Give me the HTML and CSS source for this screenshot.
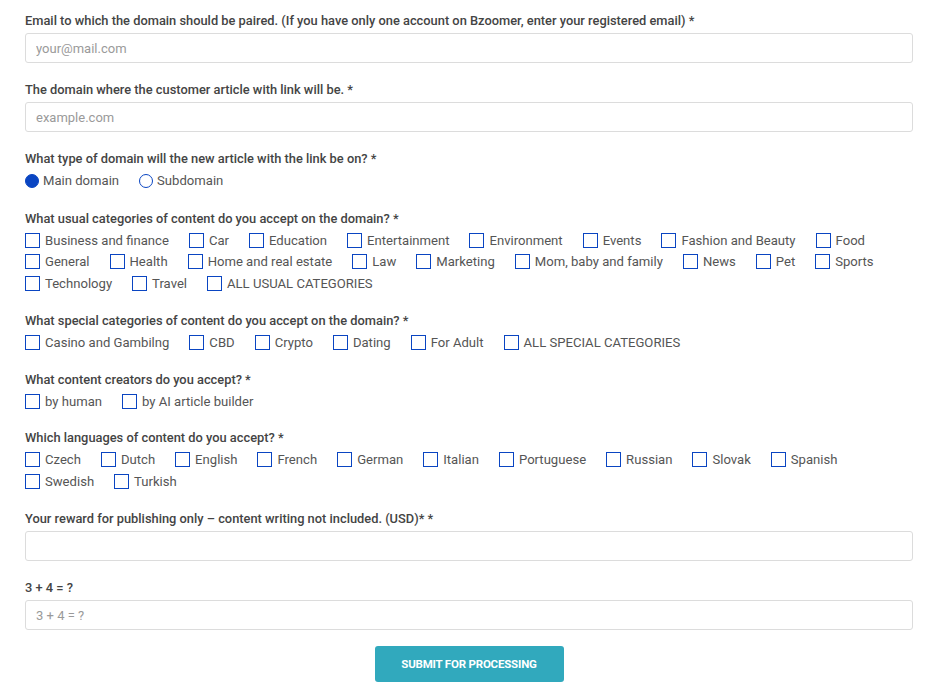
FILE: index.html
```html
<!DOCTYPE html>
<html lang="en">
<head>
<meta charset="utf-8">
<title>Domain form</title>
<link rel="stylesheet" href="styles.css">
</head>
<body>
<form class="form">
  <div class="field">
    <label class="label">Email to which the domain should be paired. (If you have only one account on Bzoomer, enter your registered email) *</label>
    <input class="input" type="text" placeholder="your@mail.com">
  </div>
  <div class="field">
    <label class="label">The domain where the customer article with link will be. *</label>
    <input class="input" type="text" placeholder="example.com">
  </div>
  <div class="field">
    <label class="label label-opts">What type of domain will the new article with the link be on? *</label>
    <div class="options">
      <label class="opt"><input class="radio" type="radio" name="t" checked><span>Main domain</span></label>
      <label class="opt"><input class="radio" type="radio" name="t"><span>Subdomain</span></label>
    </div>
  </div>
  <div class="field">
    <label class="label label-opts">What usual categories of content do you accept on the domain? *</label>
    <div class="options">
      <label class="opt"><input class="check" type="checkbox"><span>Business and finance</span></label>
      <label class="opt"><input class="check" type="checkbox"><span>Car</span></label>
      <label class="opt"><input class="check" type="checkbox"><span>Education</span></label>
      <label class="opt"><input class="check" type="checkbox"><span>Entertainment</span></label>
      <label class="opt"><input class="check" type="checkbox"><span>Environment</span></label>
      <label class="opt"><input class="check" type="checkbox"><span>Events</span></label>
      <label class="opt"><input class="check" type="checkbox"><span>Fashion and Beauty</span></label>
      <label class="opt"><input class="check" type="checkbox"><span>Food</span></label>
      <label class="opt"><input class="check" type="checkbox"><span>General</span></label>
      <label class="opt"><input class="check" type="checkbox"><span>Health</span></label>
      <label class="opt"><input class="check" type="checkbox"><span>Home and real estate</span></label>
      <label class="opt"><input class="check" type="checkbox"><span>Law</span></label>
      <label class="opt"><input class="check" type="checkbox"><span>Marketing</span></label>
      <label class="opt"><input class="check" type="checkbox"><span>Mom, baby and family</span></label>
      <label class="opt"><input class="check" type="checkbox"><span>News</span></label>
      <label class="opt"><input class="check" type="checkbox"><span>Pet</span></label>
      <label class="opt"><input class="check" type="checkbox"><span>Sports</span></label>
      <label class="opt"><input class="check" type="checkbox"><span>Technology</span></label>
      <label class="opt"><input class="check" type="checkbox"><span>Travel</span></label>
      <label class="opt"><input class="check" type="checkbox"><span>ALL USUAL CATEGORIES</span></label>
    </div>
  </div>
  <div class="field field-tight">
    <label class="label label-opts">What special categories of content do you accept on the domain? *</label>
    <div class="options">
      <label class="opt"><input class="check" type="checkbox"><span>Casino and Gambilng</span></label>
      <label class="opt"><input class="check" type="checkbox"><span>CBD</span></label>
      <label class="opt"><input class="check" type="checkbox"><span>Crypto</span></label>
      <label class="opt"><input class="check" type="checkbox"><span>Dating</span></label>
      <label class="opt"><input class="check" type="checkbox"><span>For Adult</span></label>
      <label class="opt"><input class="check" type="checkbox"><span>ALL SPECIAL CATEGORIES</span></label>
    </div>
  </div>
  <div class="field field-tight">
    <label class="label label-opts">What content creators do you accept? *</label>
    <div class="options">
      <label class="opt"><input class="check" type="checkbox"><span>by human</span></label>
      <label class="opt"><input class="check" type="checkbox"><span>by AI article builder</span></label>
    </div>
  </div>
  <div class="field">
    <label class="label label-opts">Which languages of content do you accept? *</label>
    <div class="options">
      <label class="opt"><input class="check" type="checkbox"><span>Czech</span></label>
      <label class="opt"><input class="check" type="checkbox"><span>Dutch</span></label>
      <label class="opt"><input class="check" type="checkbox"><span>English</span></label>
      <label class="opt"><input class="check" type="checkbox"><span>French</span></label>
      <label class="opt"><input class="check" type="checkbox"><span>German</span></label>
      <label class="opt"><input class="check" type="checkbox"><span>Italian</span></label>
      <label class="opt"><input class="check" type="checkbox"><span>Portuguese</span></label>
      <label class="opt"><input class="check" type="checkbox"><span>Russian</span></label>
      <label class="opt"><input class="check" type="checkbox"><span>Slovak</span></label>
      <label class="opt"><input class="check" type="checkbox"><span>Spanish</span></label>
      <label class="opt"><input class="check" type="checkbox"><span>Swedish</span></label>
      <label class="opt"><input class="check" type="checkbox"><span>Turkish</span></label>
    </div>
  </div>
  <div class="field">
    <label class="label">Your reward for publishing only – content writing not included. (USD)* *</label>
    <input class="input" type="text">
  </div>
  <div class="field field-last">
    <label class="label">3 + 4 = ?</label>
    <input class="input" type="text" placeholder="3 + 4 = ?">
  </div>
  <div class="actions">
    <button class="submit" type="button">SUBMIT FOR PROCESSING</button>
  </div>
</form>
</body>
</html>
```

FILE: styles.css
```css
* { box-sizing: border-box; }
html, body { margin: 0; padding: 0; background: #fff; }
body {
  font-family: Roboto, "Noto Sans", sans-serif;
  color: #4a4a4a;
}
.form {
  width: 888px;
  margin: 0 0 0 25px;
  padding-top: 13px;
}
.field { margin-bottom: 19px; }
.field-tight { margin-bottom: 18px; }
.field-last { margin-bottom: 16px; }
.label {
  display: block;
  font-size: 12.85px;
  line-height: 16px;
  font-weight: 500;
  color: #444;
  margin-bottom: 4px;
}
.label-opts { margin-bottom: 3px; }
.input {
  display: block;
  width: 100%;
  height: 30px;
  border: 1px solid #dcdcdc;
  border-radius: 3px;
  padding: 0 10px;
  font-family: Roboto, "Noto Sans", sans-serif;
  font-size: 13px;
  color: #444;
  outline: none;
}
.input::placeholder { color: #9a9a9a; }
.options {
  display: flex;
  flex-wrap: wrap;
  column-gap: 20px;
}
.opt {
  display: flex;
  align-items: center;
  height: 21.5px;
  font-size: 13.1px;
  color: #555;
}
.check, .radio {
  -webkit-appearance: none;
  appearance: none;
  margin: 0 5px 0 0;
  width: 15px;
  height: 15px;
  border: 1.5px solid #0a45c2;
  background: #fff;
  flex: none;
}
.radio {
  width: 14px;
  height: 14px;
  border-radius: 50%;
  margin-right: 4px;
}
.radio:checked { background: #0a45c2; }
.actions {
  display: flex;
  justify-content: center;
}
.submit {
  width: 189px;
  height: 36px;
  border: 0;
  border-radius: 3px;
  background: #31a9bd;
  color: #fff;
  font-family: Roboto, sans-serif;
  font-weight: 700;
  font-size: 11.5px;
  letter-spacing: -0.2px;
}
```
